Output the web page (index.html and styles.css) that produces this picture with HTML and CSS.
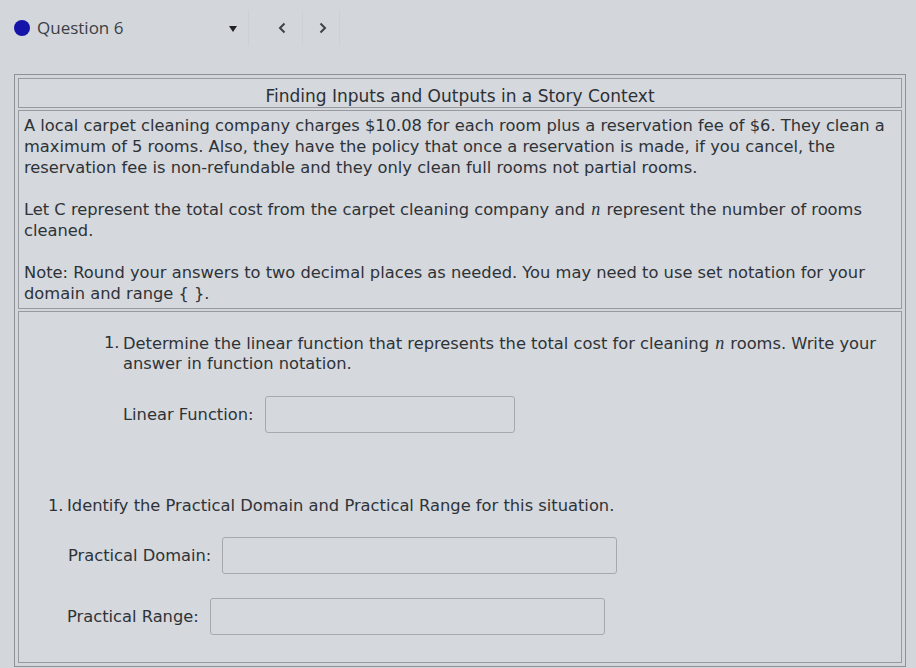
FILE: index.html
```html
<!DOCTYPE html>
<html>
<head>
<meta charset="utf-8">
<link rel="stylesheet" href="styles.css">
</head>
<body>
<div class="topbar">
  <span class="dot"></span>
  <span class="qtitle">Question 6</span>
  <span class="caret"></span>
  <span class="nav">
    <span class="navbtn prev"><svg width="8" height="12" viewBox="0 0 8 12"><path d="M6.5 1.5 L2 6 L6.5 10.5" fill="none" stroke="#3d4248" stroke-width="2"/></svg></span>
    <span class="navbtn next"><svg width="8" height="12" viewBox="0 0 8 12"><path d="M1.5 1.5 L6 6 L1.5 10.5" fill="none" stroke="#3d4248" stroke-width="2"/></svg></span>
  </span>
</div>
<div class="panel">
  <div class="cell title">Finding Inputs and Outputs in a Story Context</div>
  <div class="cell story">
    <p>A local carpet cleaning company charges $10.08 for each room plus a reservation fee of $6. They clean a maximum of 5 rooms. Also, they have the policy that once a reservation is made, if you cancel, the reservation fee is non-refundable and they only clean full rooms not partial rooms.</p>
    <p>Let C represent the total cost from the carpet cleaning company and <i class="var">n</i> represent the number of rooms cleaned.</p>
    <p>Note: Round your answers to two decimal places as needed. You may need to use set notation for your domain and range { }.</p>
  </div>
  <div class="cell work">
    <div class="q q1">
      <div class="qtext"><span class="num">1.</span><span>Determine the linear function that represents the total cost for cleaning <i class="var">n</i> rooms. Write your answer in function notation.</span></div>
      <div class="field"><span class="lbl">Linear Function:</span><span class="inp w1"></span></div>
    </div>
    <div class="q q2">
      <div class="qtext"><span class="num">1.</span><span>Identify the Practical Domain and Practical Range for this situation.</span></div>
      <div class="field f-dom"><span class="lbl">Practical Domain:</span><span class="inp w2"></span></div>
      <div class="field f-rng"><span class="lbl">Practical Range:</span><span class="inp w2"></span></div>
    </div>
  </div>
</div>
</body>
</html>
```
FILE: styles.css
```css
html, body {
  margin: 0;
  padding: 0;
  background: #d3d6db;
}
body {
  width: 916px;
  height: 668px;
  overflow: hidden;
  font-family: "DejaVu Sans", "Open Sans", sans-serif;
  font-size: 16.3px;
  color: #2e3338;
}
.topbar {
  height: 56px;
  display: flex;
  align-items: center;
  padding-left: 14px;
  box-sizing: border-box;
  padding-bottom: 1px;
}
.dot {
  width: 16px;
  height: 16px;
  border-radius: 50%;
  background: #1414a8;
  flex: none;
}
.qtitle {
  margin-left: 7px;
  width: 192px;
  font-family: "Open Sans", sans-serif;
  font-size: 17px;
  color: #3a3f45;
}
.caret {
  width: 0;
  height: 0;
  border-left: 4px solid transparent;
  border-right: 4px solid transparent;
  border-top: 6px solid #202226;
  margin-top: 2px;
}
.nav {
  display: flex;
  margin-left: 11px;
  height: 36px;
}
.navbtn {
  height: 36px;
  display: flex;
  align-items: center;
  box-sizing: border-box;
  border-left: 1px solid #cdd0d5;
}
.prev {
  width: 54px;
  padding-left: 29px;
}
.next {
  width: 38px;
  padding-left: 16px;
  border-right: 1px solid #cdd0d5;
}
.panel {
  margin: 18px 0 0 14px;
  width: 892px;
  box-sizing: border-box;
  border: 1px solid #8e9297;
  padding: 3px;
  display: flex;
  flex-direction: column;
  gap: 2px;
}
.cell {
  border: 1px solid #979ba0;
  background: #d5d8dd;
}
.title {
  height: 30px;
  box-sizing: border-box;
  padding-top: 5px;
  display: flex;
  align-items: center;
  justify-content: center;
  font-size: 17px;
  color: #2c3035;
}
.story {
  padding: 4px 5px 4px 5px;
  line-height: 21px;
}
.story p {
  margin: 0 0 21px 0;
}
.story p:last-child {
  margin-bottom: 0;
}
.var {
  font-family: "Liberation Serif", "DejaVu Serif", serif;
  font-size: 18px;
  margin: 0 1px;
}
.work {
  height: 352px;
  box-sizing: border-box;
  padding-top: 21px;
  line-height: 20px;
}
.qtext {
  display: flex;
}
.num {
  flex: none;
  width: 19px;
}
.q1 {
  margin-left: 85px;
}
.q2 {
  margin-left: 29px;
  margin-top: 63px;
}
.field {
  display: flex;
  align-items: center;
  margin-left: 19px;
  margin-top: 22px;
}
.q2 .field {
  margin-left: 20px;
}
.q2 .f-dom {
  margin-top: 21px;
}
.q2 .f-rng {
  margin-top: 24px;
  margin-left: 19px;
}
.lbl {
  margin-right: 11px;
}
.inp {
  display: block;
  height: 37px;
  box-sizing: border-box;
  border: 1px solid #a6aaaf;
  border-radius: 3px;
  background: #d5d8dd;
}
.w1 { width: 250px; }
.w2 { width: 395px; }
```
